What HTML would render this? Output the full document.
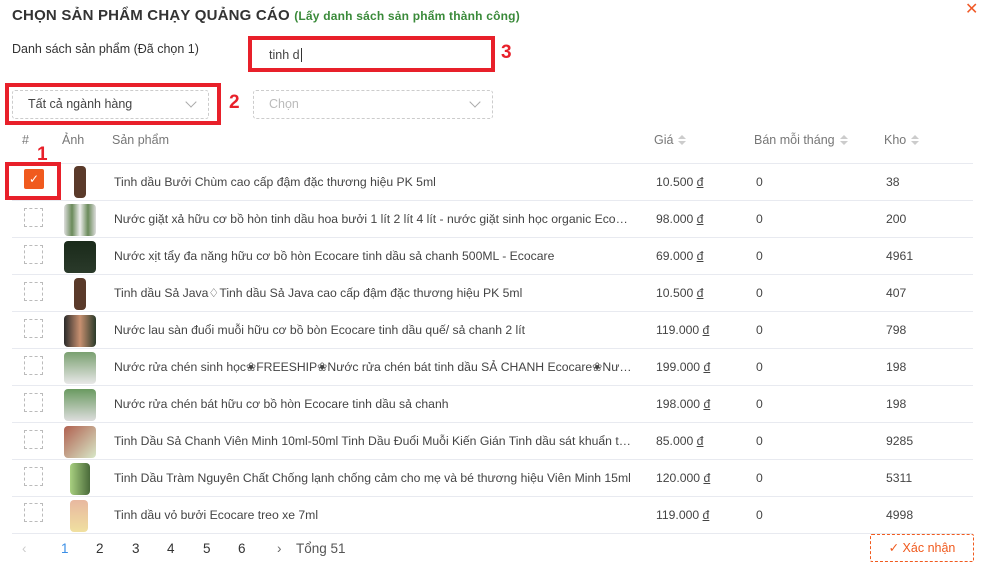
<!DOCTYPE html>
<html><head><meta charset="utf-8"><style>
*{box-sizing:border-box;margin:0;padding:0}
body{width:985px;height:574px;background:#fff;font-family:"Liberation Sans",sans-serif;color:#333;position:relative;overflow:hidden}
.a{position:absolute;white-space:nowrap}
.red{position:absolute;border:4px solid #e8202a}
.dash{position:absolute;border:1px dashed #ccc;border-radius:3px}
.cb{position:absolute;left:24px;width:19px;height:19px;border:1px dashed #bbb}
.row{position:absolute;left:12px;width:961px;height:1px;background:#e8eaf0}
.t{font-size:12.2px;color:#444}
.p{width:518px;overflow:hidden;text-overflow:ellipsis}
.h{font-size:12.5px;color:#777}
.img{position:absolute;left:64px;width:32px;height:32px;border-radius:4px}
.arr{display:inline-block;vertical-align:middle;margin-left:5px;width:8px;height:11px;position:relative}
.arr:before{content:"";position:absolute;left:0;top:0;border:4px solid transparent;border-bottom:4px solid #ccc;border-top:0}
.arr:after{content:"";position:absolute;left:0;top:6px;border:4px solid transparent;border-top:4px solid #ccc;border-bottom:0}
.chev{position:absolute;width:8px;height:8px;border-right:1px solid #aaa;border-bottom:1px solid #aaa;transform:rotate(45deg)}
.pg{font-size:13.5px;color:#333;top:541px}
</style></head><body>
<div class="a" style="left:12px;top:7px;font-size:15px;font-weight:bold;color:#333;letter-spacing:.2px">CHỌN SẢN PHẨM CHẠY QUẢNG CÁO <span style="font-size:12px;color:#3a8a3a">(Lấy danh sách sản phẩm thành công)</span></div>
<div class="a" style="left:965px;top:-1px;font-size:16px;color:#f05a28">✕</div>
<div class="a" style="left:12px;top:42px;font-size:12.5px;color:#333">Danh sách sản phẩm (Đã chọn 1)</div>
<div class="red" style="left:248px;top:36px;width:247px;height:36px"></div>
<div class="a" style="left:269px;top:48px;font-size:12.5px;color:#444">tinh d<span style="border-left:1px solid #333;margin-left:1px"></span></div>
<div class="a" style="left:501px;top:42px;font-size:19px;font-weight:bold;color:#e8202a">3</div>
<div class="red" style="left:5px;top:83px;width:216px;height:42px"></div>
<div class="dash" style="left:12px;top:90px;width:197px;height:29px"></div>
<div class="a" style="left:28px;top:97px;font-size:12.5px;color:#444">Tất cả ngành hàng</div>
<div class="chev" style="left:187px;top:98px"></div>
<div class="a" style="left:229px;top:92px;font-size:19px;font-weight:bold;color:#e8202a">2</div>
<div class="dash" style="left:253px;top:90px;width:240px;height:29px"></div>
<div class="a" style="left:269px;top:97px;font-size:12.5px;color:#bbb">Chọn</div>
<div class="chev" style="left:471px;top:98px"></div>

<div class="a h" style="left:22px;top:133px">#</div>
<div class="a h" style="left:62px;top:133px">Ảnh</div>
<div class="a h" style="left:112px;top:133px">Sản phẩm</div>
<div class="a h" style="left:654px;top:133px">Giá<span class="arr"></span></div>
<div class="a h" style="left:754px;top:133px">Bán mỗi tháng<span class="arr"></span></div>
<div class="a h" style="left:884px;top:133px">Kho<span class="arr"></span></div>

<div class="row" style="top:163px"></div><div class="row" style="top:200px"></div><div class="row" style="top:237px"></div><div class="row" style="top:274px"></div><div class="row" style="top:311px"></div><div class="row" style="top:348px"></div><div class="row" style="top:385px"></div><div class="row" style="top:422px"></div><div class="row" style="top:459px"></div><div class="row" style="top:496px"></div><div class="row" style="top:533px"></div>

<div class="a" style="left:37px;top:144px;font-size:19px;font-weight:bold;color:#e8202a">1</div>
<div class="red" style="left:5px;top:162px;width:56px;height:38px"></div>
<div class="a" style="left:24px;top:169px;width:20px;height:20px;background:#f05a1e;border-radius:2px;color:#fff;font-size:12px;text-align:center;line-height:20px">✓</div>

<div class="img" style="top:166px;left:74px;width:12px;background:#5a3a2a"></div>
<div class="img" style="top:204px;background:linear-gradient(90deg,#ddd,#6a8a5a,#eee,#6a8a5a,#ddd)"></div>
<div class="img" style="top:241px;background:linear-gradient(#1a2a1a,#2a3a2a)"></div>
<div class="img" style="top:278px;left:74px;width:12px;background:#5a3a2a"></div>
<div class="img" style="top:315px;background:linear-gradient(90deg,#2a2a2a,#c89070,#2a3a2a)"></div>
<div class="img" style="top:352px;background:linear-gradient(#7aa070,#e8e8e8)"></div>
<div class="img" style="top:389px;background:linear-gradient(#6a9a60,#ddd)"></div>
<div class="img" style="top:426px;background:linear-gradient(135deg,#b06050,#d8e8c8)"></div>
<div class="img" style="top:463px;left:70px;width:20px;background:linear-gradient(90deg,#a8d080,#4a6a3a)"></div>
<div class="img" style="top:500px;left:70px;width:18px;background:linear-gradient(#e8b8a0,#f0e0a0)"></div>

<div class="cb" style="top:208px"></div><div class="cb" style="top:245px"></div><div class="cb" style="top:282px"></div><div class="cb" style="top:319px"></div><div class="cb" style="top:356px"></div><div class="cb" style="top:393px"></div><div class="cb" style="top:430px"></div><div class="cb" style="top:467px"></div><div class="cb" style="top:503px"></div>

<div class="a t p" style="left:114px;top:175px">Tinh dầu Bưởi Chùm cao cấp đậm đặc thương hiệu PK 5ml</div>
<div class="a t p" style="left:114px;top:212px">Nước giặt xả hữu cơ bồ hòn tinh dầu hoa bưởi 1 lít 2 lít 4 lít - nước giặt sinh học organic Ecocare</div>
<div class="a t p" style="left:114px;top:249px">Nước xịt tẩy đa năng hữu cơ bồ hòn Ecocare tinh dầu sả chanh 500ML - Ecocare</div>
<div class="a t p" style="left:114px;top:286px">Tinh dầu Sả Java♢Tinh dầu Sả Java cao cấp đậm đặc thương hiệu PK 5ml</div>
<div class="a t p" style="left:114px;top:323px">Nước lau sàn đuổi muỗi hữu cơ bồ bòn Ecocare tinh dầu quế/ sả chanh 2 lít</div>
<div class="a t p" style="left:114px;top:360px">Nước rửa chén sinh học❀FREESHIP❀Nước rửa chén bát tinh dầu SẢ CHANH Ecocare❀Nước rửa</div>
<div class="a t p" style="left:114px;top:397px">Nước rửa chén bát hữu cơ bồ hòn Ecocare tinh dầu sả chanh</div>
<div class="a t p" style="left:114px;top:434px">Tinh Dầu Sả Chanh Viên Minh 10ml-50ml Tinh Dầu Đuổi Muỗi Kiến Gián Tinh dầu sát khuẩn tự nhiên</div>
<div class="a t p" style="left:114px;top:471px">Tinh Dầu Tràm Nguyên Chất Chống lạnh chống cảm cho mẹ và bé thương hiệu Viên Minh 15ml</div>
<div class="a t p" style="left:114px;top:508px">Tinh dầu vỏ bưởi Ecocare treo xe 7ml</div>

<div class="a t" style="left:656px;top:175px">10.500 <u>đ</u></div><div class="a t" style="left:756px;top:175px">0</div><div class="a t" style="left:886px;top:175px">38</div>
<div class="a t" style="left:656px;top:212px">98.000 <u>đ</u></div><div class="a t" style="left:756px;top:212px">0</div><div class="a t" style="left:886px;top:212px">200</div>
<div class="a t" style="left:656px;top:249px">69.000 <u>đ</u></div><div class="a t" style="left:756px;top:249px">0</div><div class="a t" style="left:886px;top:249px">4961</div>
<div class="a t" style="left:656px;top:286px">10.500 <u>đ</u></div><div class="a t" style="left:756px;top:286px">0</div><div class="a t" style="left:886px;top:286px">407</div>
<div class="a t" style="left:656px;top:323px">119.000 <u>đ</u></div><div class="a t" style="left:756px;top:323px">0</div><div class="a t" style="left:886px;top:323px">798</div>
<div class="a t" style="left:656px;top:360px">199.000 <u>đ</u></div><div class="a t" style="left:756px;top:360px">0</div><div class="a t" style="left:886px;top:360px">198</div>
<div class="a t" style="left:656px;top:397px">198.000 <u>đ</u></div><div class="a t" style="left:756px;top:397px">0</div><div class="a t" style="left:886px;top:397px">198</div>
<div class="a t" style="left:656px;top:434px">85.000 <u>đ</u></div><div class="a t" style="left:756px;top:434px">0</div><div class="a t" style="left:886px;top:434px">9285</div>
<div class="a t" style="left:656px;top:471px">120.000 <u>đ</u></div><div class="a t" style="left:756px;top:471px">0</div><div class="a t" style="left:886px;top:471px">5311</div>
<div class="a t" style="left:656px;top:508px">119.000 <u>đ</u></div><div class="a t" style="left:756px;top:508px">0</div><div class="a t" style="left:886px;top:508px">4998</div>

<div class="a pg" style="left:22px;color:#ccc">‹</div>
<div class="a pg" style="left:61px;color:#3a8ee6">1</div>
<div class="a pg" style="left:96px">2</div>
<div class="a pg" style="left:132px">3</div>
<div class="a pg" style="left:167px">4</div>
<div class="a pg" style="left:203px">5</div>
<div class="a pg" style="left:238px">6</div>
<div class="a pg" style="left:277px;color:#666">›</div>
<div class="a pg" style="left:296px;color:#555">Tổng 51</div>
<div class="a" style="left:870px;top:534px;width:104px;height:28px;border:1px dashed #f05a1e;border-radius:2px;color:#f05a1e;font-size:12.5px;text-align:center;line-height:26px">✓ Xác nhận</div>
</body></html>
